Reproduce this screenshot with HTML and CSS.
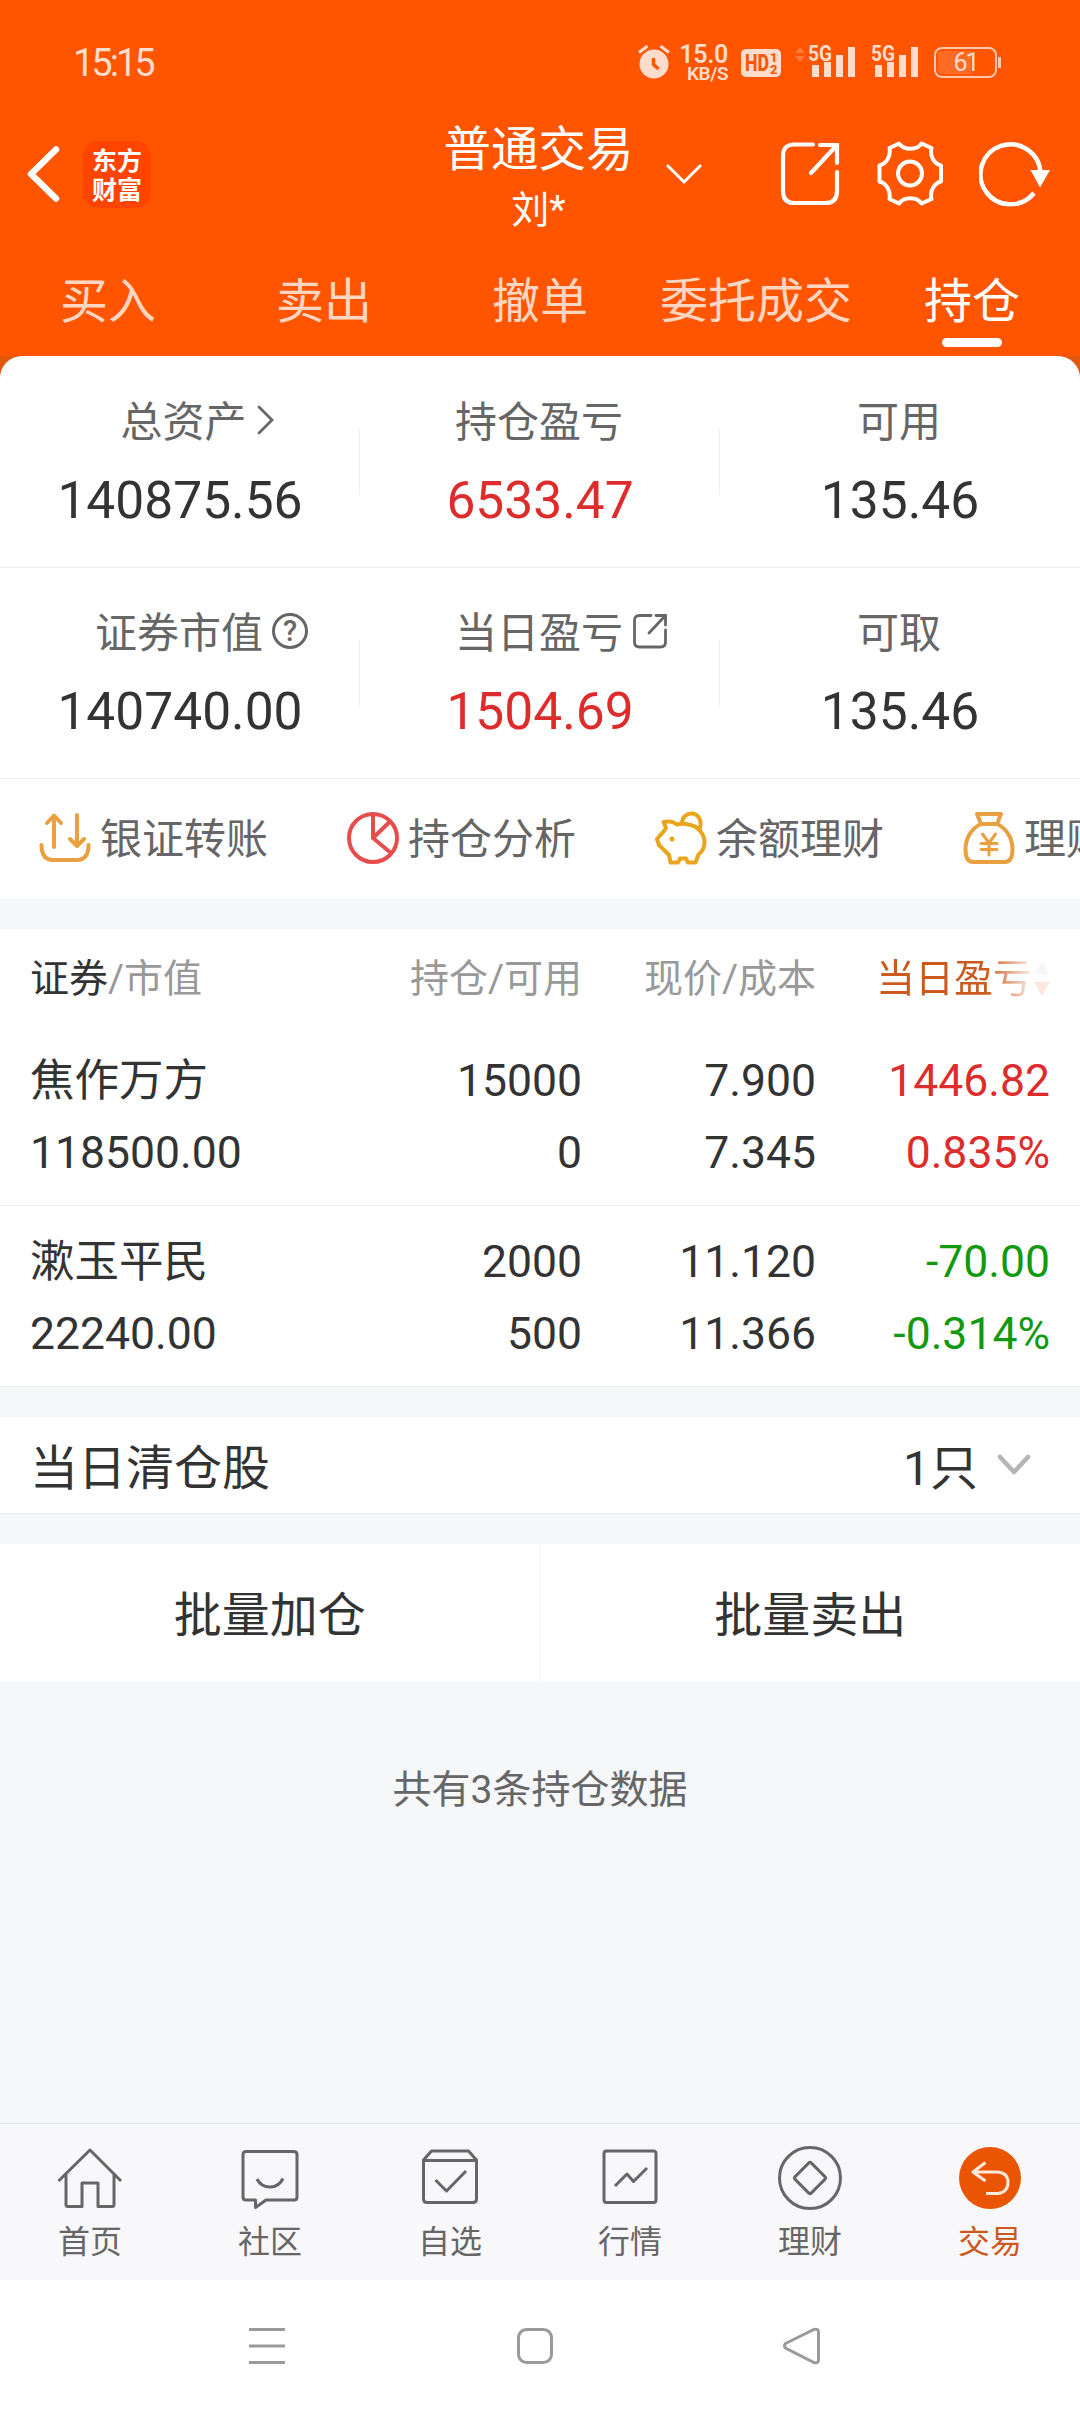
FILE: index.html
```html
<!DOCTYPE html>
<html lang="zh-CN">
    <head>
        <meta charset="UTF-8">
        <meta name="viewport" content="width=device-width, initial-scale=1.0">
        <title>普通交易 - 持仓</title>
        <link rel="stylesheet" href="styles.css">
    </head>
    <body>
        <header class="header">
            <div class="status-bar">
                <span class="time">15:15</span>
                <div class="status-icons">
                    <svg class="alarm" width="32" height="36" viewBox="0 0 32 36">
                        <circle cx="16" cy="19" r="14.500" fill="#ffdccb"/>
                        <path d="M1 7.500L9.500 1M31 7.500L22.500 1" stroke="#ffdccb" stroke-width="3" fill="none"/>
                        <path d="M15.500 13v6.500l5 4.500" stroke="#ff5500" stroke-width="3.500" fill="none"/>
                    </svg>
                    <div class="speed">
                        <span class="speed-num">15.0</span>
                        <span class="speed-unit">KB/S</span>
                    </div>
                    <svg class="hd" width="40" height="28" viewBox="0 0 40 28">
                        <rect width="40" height="28" rx="5" fill="#ffdccb"/>
                        <text x="4" y="22" font-size="23" textLength="24" lengthAdjust="spacingAndGlyphs">HD</text>
                        <text x="29" y="13" font-size="13">1</text>
                        <text x="29" y="25" font-size="13">2</text>
                    </svg>
                    <svg class="signal" width="64" height="34" viewBox="0 0 64 34">
                        <path d="M0 8l5-6 5 6zM0 11h10l-5 6z" fill="#ff7a3a"/>
                        <text x="13" y="15.500" font-size="22" textLength="24" lengthAdjust="spacingAndGlyphs">5G</text>
                        <path d="M17 20h7v12h-7zM29 17h7v15h-7zM41 10h7v22h-7zM53 2h7v30h-7z"/>
                    </svg>
                    <svg class="signal" width="52" height="34" viewBox="12 0 52 34">
                        <text x="13" y="15.500" font-size="22" textLength="24" lengthAdjust="spacingAndGlyphs">5G</text>
                        <path d="M17 20h7v12h-7zM29 17h7v15h-7zM41 10h7v22h-7zM53 2h7v30h-7z"/>
                    </svg>
                    <div class="battery">61</div>
                </div>
            </div>

            <div class="nav">
                <div class="nav-left">
                    <svg width="34" height="60" viewBox="0 0 34 60">
                        <path d="M30 5.500L5 30l25 24.500" fill="none" stroke="#fff" stroke-width="6.500" stroke-linecap="round" stroke-linejoin="round"/>
                    </svg>
                    <div class="logo"><span>东方</span><span>财富</span></div>
                </div>
                <div class="nav-title">
                    <div class="title">普通交易</div>
                    <div class="user">刘*</div>
                </div>
                <div class="nav-right">
                    <svg class="nav-down" width="38" height="22" viewBox="0 0 38 22">
                        <path d="M2 2l17 17L36 2" fill="none" stroke="#fff" stroke-width="3"/>
                    </svg>
                    <svg width="60" height="66" viewBox="0 0 60 66">
                        <path d="M33 3.500H14Q3 3.500 3 15V50Q3 62 14 62H46Q57 62 57 50V31M40 4H57V22M56 5L31 32" fill="none" stroke="#fff" stroke-width="4.200" stroke-linecap="round"/>
                    </svg>
                    <svg width="68" height="66" viewBox="0 0 68 66">
                        <path d="M22 2.500C27 9.500 40 9.500 44.500 2.500L54.500 7C52.500 15 57 22.500 64 24.500V40.500C57 42.500 52.500 50 54.500 58L44.500 62.500C40 55.500 27 55.500 22 62.500L12.500 58C14 50 9.500 42.500 2.500 40.500V24.500C9.500 22.500 14 15 12.500 7Z" fill="none" stroke="#fff" stroke-width="4" stroke-linejoin="round"/>
                        <circle cx="33" cy="32.500" r="12" fill="none" stroke="#fff" stroke-width="4"/>
                    </svg>
                    <svg width="72" height="66" viewBox="0 0 72 66">
                        <path d="M55 52A30 30 0 1 1 61.500 32" fill="none" stroke="#fff" stroke-width="4.500"/>
                        <path d="M51.500 29H71L61 46.500Z" fill="#fff"/>
                    </svg>
                </div>
            </div>

            <div class="tabs">
                <div class="tab">买入</div>
                <div class="tab">卖出</div>
                <div class="tab">撤单</div>
                <div class="tab">委托成交</div>
                <div class="tab active">持仓</div>
            </div>
        </header>

        <div class="asset-wrap">
            <div class="assets">
                <div class="asset-row">
                    <div class="asset">
                        <div class="label shift">总资产<svg class="label-icon" width="20" height="30" viewBox="0 0 20 30"><path d="M3 2l13 13L3 28"/></svg></div>
                        <div class="value">140875.56</div>
                    </div>
                    <div class="asset">
                        <div class="label">持仓盈亏</div>
                        <div class="value red">6533.47</div>
                    </div>
                    <div class="asset">
                        <div class="label">可用</div>
                        <div class="value">135.46</div>
                    </div>
                </div>
                <div class="asset-row">
                    <div class="asset">
                        <div class="label">证券市值<span class="label-icon help">?</span></div>
                        <div class="value">140740.00</div>
                    </div>
                    <div class="asset">
                        <div class="label">当日盈亏<svg class="label-icon" width="36" height="36" viewBox="0 0 36 36"><path d="M19 2.500H7.500Q2.500 2.500 2.500 7.500V29Q2.500 34 7.500 34H28.500Q33.500 34 33.500 29V17M24 2.500H33.500V12M33 3L17 20"/></svg></div>
                        <div class="value red">1504.69</div>
                    </div>
                    <div class="asset">
                        <div class="label">可取</div>
                        <div class="value">135.46</div>
                    </div>
                </div>
            </div>
        </div>

        <div class="shortcuts">
            <div class="shortcut">
                <svg width="52" height="54" viewBox="0 0 52 54" stroke="#e8a040">
                    <path d="M15 36V5M8 12l7-7.500 7 7.500M38 4v31M31 28l7 7 7-7M2.500 34q0 15 12 15h23q12 0 12-15"/>
                </svg>
                <span>银证转账</span>
            </div>
            <div class="shortcut">
                <svg width="52" height="54" viewBox="0 0 52 54" stroke="#e54d4f">
                    <path d="M26 3V27L42.500 11M26 27l18 15"/>
                    <circle cx="26" cy="27" r="24"/>
                </svg>
                <span>持仓分析</span>
            </div>
            <div class="shortcut">
                <svg width="52" height="54" viewBox="0 0 52 54" stroke="#eba51c">
                    <path d="M8.500 11q9-2 13 2.500 6-1.500 12 0C43 15 49.500 23 49.500 31q0 8-6 12.500l-3 8H33l-2-4h-6l-2 4h-7.500l-1.500-7.500L4 34l-2-6 7-8 2-3z"/>
                    <path d="M27 12.500C27-1 46.500-1 45.500 13.500q-.5 3-1 5"/>
                    <circle cx="17" cy="28" r="2.500" fill="#eba51c" stroke="none"/>
                </svg>
                <span>余额理财</span>
            </div>
            <div class="shortcut">
                <svg width="52" height="54" viewBox="0 0 52 54" stroke="#e8a040">
                    <path d="M14 3H38L34 13H18ZM18 13C7 18 2.500 29 2.500 38Q2.500 51 10 51H42Q49.500 51 49.500 38C49.500 29 45 18 34 13"/>
                    <path d="M19.500 23l6.500 9 6.500-9M26 32v12M18 32.500h16M18 38.500h16" stroke-width="3"/>
                </svg>
                <span>理财</span>
            </div>
        </div>

        <div class="holdings">
            <div class="grid thead">
                <div><b>证券</b>/市值</div>
                <div>持仓/可用</div>
                <div>现价/成本</div>
                <div class="sorted">
                    <span class="sort-text">当日盈亏</span>
                    <svg width="16" height="36" viewBox="0 0 16 36">
                        <path d="M0 14L8 0l8 14z" fill="#f6f6f6"/>
                        <path d="M0 21h16L8 35z" fill="#fde6dd"/>
                    </svg>
                </div>
            </div>
            <div class="grid stock">
                <div>焦作万方</div>
                <div>15000</div>
                <div>7.900</div>
                <div class="red">1446.82</div>
                <div>118500.00</div>
                <div>0</div>
                <div>7.345</div>
                <div class="red">0.835%</div>
            </div>
            <div class="grid stock">
                <div>漱玉平民</div>
                <div>2000</div>
                <div>11.120</div>
                <div class="green">-70.00</div>
                <div>22240.00</div>
                <div>500</div>
                <div>11.366</div>
                <div class="green">-0.314%</div>
            </div>
        </div>

        <div class="cleared">
            <span>当日清仓股</span>
            <div class="cleared-count">
                <span>1只</span>
                <svg width="34" height="22" viewBox="0 0 34 22">
                    <path d="M3 3l14 15L31 3" fill="none" stroke="#b5b5b5" stroke-width="4.500" stroke-linecap="round" stroke-linejoin="round"/>
                </svg>
            </div>
        </div>

        <div class="batch">
            <div class="batch-btn">批量加仓</div>
            <div class="batch-btn">批量卖出</div>
        </div>

        <div class="summary">共有3条持仓数据</div>

        <nav class="tabbar">
            <div class="tabbar-item">
                <svg width="66" height="66" viewBox="0 0 66 66">
                    <path d="M1.500 36L33 5l31 31M9 28V59.500Q9 61.500 11 61.500H25V38H41V61.500H55Q57 61.500 57 59.500V28"/>
                </svg>
                <span>首页</span>
            </div>
            <div class="tabbar-item">
                <svg width="66" height="66" viewBox="0 0 66 66">
                    <path d="M8 6.500H57Q60 6.500 60 9.500V52Q60 55 57 55H29L18.500 62.500V55H9Q6 55 6 52V9.500Q6 6.500 9 6.500M20 34q4 8 13 8t13-8.500"/>
                </svg>
                <span>社区</span>
            </div>
            <div class="tabbar-item">
                <svg width="66" height="66" viewBox="0 0 66 66">
                    <path d="M6.500 15L14.500 6H51.500L59.500 15V54Q59.500 57.500 56 57.500H10Q6.500 57.500 6.500 54ZM6.500 15.500H59.500M18.500 35l11 11L49 26"/>
                </svg>
                <span>自选</span>
            </div>
            <div class="tabbar-item">
                <svg width="66" height="66" viewBox="0 0 66 66">
                    <rect x="7" y="6" width="52" height="51.500" rx="2.500"/>
                    <path d="M18 41l12-12 6.500 7.500L50 23"/>
                </svg>
                <span>行情</span>
            </div>
            <div class="tabbar-item">
                <svg width="66" height="66" viewBox="0 0 66 66">
                    <circle cx="33" cy="33" r="30.500"/>
                    <rect x="21.500" y="21.500" width="23" height="23" rx="2" transform="rotate(45 33 33)"/>
                </svg>
                <span>理财</span>
            </div>
            <div class="tabbar-item current">
                <svg width="66" height="66" viewBox="0 0 66 66">
                    <circle class="disc" cx="33" cy="33" r="31"/>
                    <path class="arrow" d="M28.500 17.500L16 27l12.500 9M17 27H41Q51 28 51 37.500T41 48.500H29"/>
                </svg>
                <span>交易</span>
            </div>
        </nav>

        <div class="sys-nav">
            <svg width="40" height="40" viewBox="0 0 40 40"><path d="M2 3.500h36M2 20h36M2 36.500h36"/></svg>
            <svg width="40" height="40" viewBox="0 0 40 40"><rect x="3.500" y="3.500" width="33" height="33" rx="8"/></svg>
            <svg width="40" height="40" viewBox="0 0 40 40"><path d="M3.500 17.500L32 3.500Q36.500 2.500 36.500 6V34Q36.500 37.500 32 36.500L3.500 22Q1.500 20 3.500 17.500Z"/></svg>
        </div>
    </body>
</html>
```

FILE: styles.css
```css
* {
    box-sizing: border-box;
}

body {
    margin: 0;
    width: 1080px;
    height: 2412px;
    display: flex;
    flex-direction: column;
    overflow: hidden;
    background-color: #f6f7f9;
    color: #333;
    font-family: Roboto, 'Noto Sans CJK SC', sans-serif;
}

svg {
    display: block;
    flex: none;
}

/* 顶部 */
.header {
    flex: none;
    height: 356px;
    background-color: #ff5500;
    color: #fff;
}

.status-bar {
    height: 126px;
    padding: 45px 83px 0 73px;
    display: flex;
    justify-content: space-between;
    color: #ffdccb;
}

.time {
    font-size: 38px;
    line-height: 36px;
    letter-spacing: -3px;
}

.status-icons {
    display: flex;
    height: 36px;
}

.speed {
    width: 52px;
    margin: 0 13px 0 6px;
    display: flex;
    flex-direction: column;
    align-items: flex-end;
    font-weight: 600;
}

.speed-num {
    font-size: 25px;
    line-height: 20px;
    letter-spacing: -0.3px;
}

.speed-unit {
    font-size: 19px;
    line-height: 17px;
    letter-spacing: -0.5px;
}

.hd {
    margin: 4px 14px 0 0;
    font-weight: 800;
    fill: #ff5500;
}

.signal {
    overflow: visible;
    fill: #ffdccb;
    font-weight: 700;
}

.signal + .signal {
    margin-left: 11px;
}

.battery {
    position: relative;
    width: 63px;
    height: 31px;
    margin: 2px 0 0 12px;
    border: 2px solid #ffc7ab;
    border-radius: 8px;
    background: linear-gradient(90deg, #ff6b22 60%, #ff5500 60%) content-box;
    padding: 2px;
    text-align: center;
    font-size: 25px;
    line-height: 24px;
    letter-spacing: -2px;
}

.battery::after {
    content: '';
    position: absolute;
    right: -6px;
    top: 8px;
    width: 3px;
    height: 11px;
    background-color: #ffc7ab;
}

.nav {
    height: 120px;
    display: flex;
    justify-content: space-between;
}

.nav-left {
    flex: 1;
    display: flex;
    align-items: center;
    padding: 0 0 24px 26px;
}

.logo {
    width: 68px;
    height: 67px;
    margin-left: 23px;
    padding-top: 4px;
    display: flex;
    flex-direction: column;
    align-items: center;
    border-radius: 15px;
    background-color: #ff4400;
    font-family: 'Noto Sans CJK SC', sans-serif;
    font-size: 25px;
    font-weight: 700;
    line-height: 29px;
}

.nav-title {
    width: 200px;
    padding-top: 1px;
    display: flex;
    flex-direction: column;
    align-items: center;
}

.title {
    font-size: 47.5px;
    line-height: 46px;
    white-space: nowrap;
}

.user {
    margin-top: 16px;
    font-size: 38px;
    line-height: 42px;
}

.nav-right {
    flex: 1;
    display: flex;
    align-items: center;
    justify-content: flex-end;
    gap: 37px;
    padding: 0 29px 24px 0;
}

.nav-right svg:last-child {
    margin-left: -3px;
}

.nav-down {
    margin-right: 40px;
}

.tabs {
    display: flex;
}

.tab {
    flex: 1;
    height: 110px;
    display: flex;
    flex-direction: column;
    align-items: center;
    padding-top: 29px;
    font-size: 48px;
    line-height: 54px;
    white-space: nowrap;
    color: #ffd6c2;
}

.tab.active {
    color: #fff;
}

.tab.active::after {
    content: '';
    width: 60px;
    height: 9px;
    margin-top: 9px;
    border-radius: 5px;
    background-color: #fff;
}

/* 资产 */
.asset-wrap {
    flex: none;
    background: linear-gradient(#e0590e 30px, #fff 30px);
}

.assets {
    background-color: #fff;
    border-radius: 22px 22px 0 0;
}

.asset-row {
    display: flex;
    height: 211px;
    border-bottom: 1px solid #eee;
}

.asset-row:first-child {
    height: 212px;
    padding-top: 1px;
}

.asset {
    position: relative;
    flex: 1;
    padding-top: 43px;
    display: flex;
    flex-direction: column;
    align-items: center;
}

.asset + .asset::before {
    content: '';
    position: absolute;
    left: -1px;
    top: 72px;
    width: 1px;
    height: 66px;
    background-color: #eee;
}

.label {
    position: relative;
    margin-left: -2px;
    font-size: 42px;
    line-height: 46px;
    color: #666;
}

.label.shift {
    margin-left: 7px;
}

.label-icon {
    position: absolute;
    left: 100%;
    top: 2px;
    margin-left: 9px;
    fill: none;
    stroke: #666;
    stroke-width: 2.8;
    stroke-linecap: round;
}

.label.shift .label-icon {
    margin-left: 9px;
    top: 5px;
}

.help {
    width: 36px;
    height: 36px;
    border: 3px solid #666;
    border-radius: 50%;
    text-align: center;
    font-size: 29px;
    font-weight: 500;
    line-height: 31px;
}

.value {
    margin-top: 25px;
    font-size: 51.5px;
    line-height: 60px;
}

.red {
    color: #dd2c2c;
}

.green {
    color: #119911;
}

/* 快捷入口 */
.shortcuts {
    flex: none;
    height: 120px;
    padding-left: 39px;
    display: flex;
    gap: 79px;
    overflow: hidden;
    background-color: #fff;
}

.shortcut {
    flex: none;
    display: flex;
    align-items: center;
    gap: 9px;
    font-size: 42px;
    line-height: 50px;
    color: #666;
}

.shortcut span {
    padding-top: 2px;
}

.shortcut svg {
    margin-bottom: 2px;
    fill: none;
    stroke-width: 4;
    stroke-linecap: round;
    stroke-linejoin: round;
}

/* 持仓列表 */
.holdings {
    flex: none;
    margin-top: 30px;
    background-color: #fff;
}

.grid {
    display: grid;
    grid-template-columns: 300px 252px 234px 234px;
    padding: 0 30px;
    text-align: right;
}

.grid > div:nth-child(4n + 1) {
    text-align: left;
}

.thead {
    height: 96px;
    padding-top: 4px;
    align-items: center;
    font-size: 39px;
    line-height: 50px;
    color: #999;
}

.thead b {
    font-weight: 400;
    color: #333;
}

.sorted {
    display: flex;
    align-items: center;
    justify-content: flex-end;
    gap: 2px;
}

.sort-text {
    background: linear-gradient(90deg, #cc5a1e 70%, #fff 104%);
    background-clip: text;
    -webkit-background-clip: text;
    color: transparent;
}

.stock {
    height: 181px;
    padding-top: 20px;
    border-bottom: 1px solid #eee;
    font-size: 44.5px;
    line-height: 72px;
    grid-auto-rows: 72px;
}

/* 当日清仓 */
.cleared {
    flex: none;
    height: 97px;
    margin-top: 30px;
    padding: 0 49px 3px 30px;
    display: flex;
    align-items: center;
    justify-content: space-between;
    border-bottom: 1px solid #e9ebee;
    background-color: #fff;
    font-size: 48px;
}

.cleared-count {
    display: flex;
    align-items: center;
    gap: 19px;
}

.cleared-count svg {
    margin-top: 2px;
}

.batch {
    flex: none;
    height: 138px;
    margin-top: 30px;
    display: flex;
    background-color: #fff;
    font-size: 48px;
    line-height: 143px;
    text-align: center;
}

.batch-btn {
    flex: 1;
}

.batch-btn:first-child {
    border-right: 1px solid #f5f5f5;
}

.summary {
    flex: 1;
    padding-top: 83px;
    text-align: center;
    font-size: 39px;
    line-height: 50px;
    color: #666;
}

/* 底部导航 */
.tabbar {
    flex: none;
    height: 157px;
    padding-top: 21px;
    display: flex;
    border-top: 1px solid #e3e5e8;
    background-color: #f8f8fa;
}

.tabbar-item {
    flex: 1;
    display: flex;
    flex-direction: column;
    align-items: center;
    font-size: 32px;
    line-height: 40px;
    color: #666;
}

.tabbar-item svg {
    margin: 0 1px 11px 0;
    fill: none;
    stroke: #666;
    stroke-width: 3;
    stroke-linejoin: round;
}

.tabbar-item.current {
    color: #cc5a1e;
}

.tabbar-item .disc {
    fill: #ea5504;
    stroke: none;
}

.tabbar-item .arrow {
    stroke: #ffeadd;
}

.sys-nav {
    flex: none;
    height: 132px;
    padding: 0 258px 0 247px;
    display: flex;
    align-items: center;
    justify-content: space-between;
    background-color: #fff;
}

.sys-nav svg {
    fill: none;
    stroke: #9a9a9a;
    stroke-width: 3;
}
```
